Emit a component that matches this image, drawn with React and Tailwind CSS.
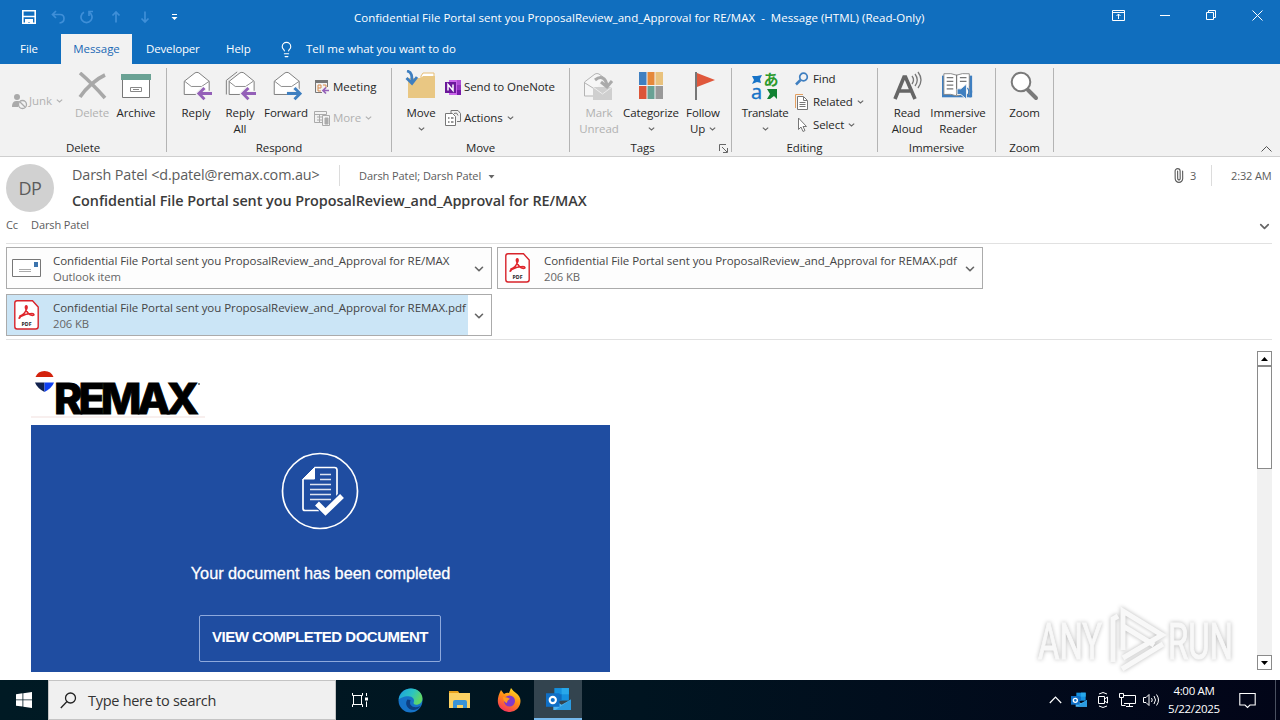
import { ChevronDown, Lightbulb, Paperclip } from "lucide-react";

const title = "Confidential File Portal sent you ProposalReview_and_Approval for RE/MAX";
const pdfName = "Confidential File Portal sent you ProposalReview_and_Approval for REMAX.pdf";

/* ---------- Ribbon building blocks ---------- */

function Caret({ className = "" }) {
  return (
    <svg width="7" height="4" viewBox="0 0 7 4" className={className}>
      <path d="M.8.6 3.5 3 6.2.6" fill="none" stroke="currentColor" strokeWidth="1.1" />
    </svg>
  );
}

function Group({ label, className, launcher, children }) {
  return (
    <div className={`flex h-[92px] shrink-0 ${className}`}>
      <div className="flex flex-1 flex-col">
        <div className="flex h-[76px]">{children}</div>
        <div className="flex h-4 items-center">
          <span className="flex-1 text-center leading-4">{label}</span>
          {launcher && (
            <svg width="9" height="9" viewBox="0 0 9 9" className="mr-[3px] ml-1" fill="none" stroke="#666">
              <path d="M.5 7V.5H7M3 3l5 5M8.500 4v4.500H4" />
            </svg>
          )}
        </div>
      </div>
      <div className="mt-1 h-[84px] w-px bg-[#b4b4b4]" />
    </div>
  );
}

function BigButton({ icon, lines, caret, className, disabled }) {
  return (
    <div className={`flex flex-col items-center pt-[6px] ${className} ${disabled ? "text-[#b1b1b1]" : ""}`}>
      <div className="flex h-8 w-8 items-center justify-center">{icon}</div>
      <span className="mt-[3px] leading-4">{lines[0]}</span>
      {lines[1] && (
        <span className="flex items-center gap-1 leading-4">
          {lines[1]}
          {caret && <Caret className="text-[#666]" />}
        </span>
      )}
      {!lines[1] && caret && <Caret className="mt-[6px] text-[#666]" />}
    </div>
  );
}

function SmallButton({ icon, label, caret, disabled, className = "" }) {
  return (
    <div className={`flex items-center ${className} ${disabled ? "text-[#b1b1b1]" : ""}`}>
      <span className="flex w-[18px] shrink-0">{icon}</span>
      <span className="leading-4">{label}</span>
      {caret && <Caret className={`ml-1 ${disabled ? "" : "text-[#666]"}`} />}
    </div>
  );
}

/* ---------- Ribbon icons ---------- */

function JunkIcon() {
  return (
    <svg width="17" height="17" viewBox="0 0 17 17">
      <circle cx="6" cy="4" r="3" fill="#aaa" />
      <path d="M1 14c0-5 2-6 5-6 2 0 3 .5 4 1.500L7 14z" fill="#aaa" />
      <circle cx="11.500" cy="11.500" r="4" fill="#f2f2f2" stroke="#aaa" strokeWidth="1.300" />
      <path d="m9 9 5 5" stroke="#aaa" strokeWidth="1.300" />
    </svg>
  );
}

function DeleteIcon() {
  return (
    <svg width="30" height="28" viewBox="0 0 30 28">
      <path d="M3 1C10 7 20 17 28 26M28 3C19 7 9 16 3 25" fill="none" stroke="#a8a8a8" strokeWidth="3.600" />
    </svg>
  );
}

function ArchiveIcon() {
  return (
    <svg width="32" height="28" viewBox="0 0 32 28">
      <path d="M2.500 8v17.500h27V8" fill="#fff" stroke="#777" />
      <path d="M1 2h30v6H1z" fill="#6aa294" />
      <path d="M10.500 15.500h11v4h-11zM13 17.500h6" fill="#fff" stroke="#888" />
    </svg>
  );
}

function MailIcon({ arrow, double }) {
  return (
    <svg width="34" height="32" viewBox="1 0 34 32">
      {double && <path d="M3.500 25V10L15 1" fill="none" stroke="#777" />}
      <path d="M5.500 11 17 2q2-1 4 0l11 9v14H5.500z" fill="#fff" stroke="#777" transform={double ? "translate(1 0)" : ""} />
      <path d="m6 11 7 5.500h11l8-5.500" fill="none" stroke="#888" />
      {arrow === "left" ? (
        <path d="M35 24H21M27 18l-6 6 6 6" fill="none" stroke="#f2f2f2" strokeWidth="6" />
      ) : (
        <path d="M19 24h14M27 18l6 6-6 6" fill="none" stroke="#f2f2f2" strokeWidth="6" />
      )}
      {arrow === "left" ? (
        <path d="M35 24H21M27 18l-6 6 6 6" fill="none" stroke="#9460b8" strokeWidth="3" />
      ) : (
        <path d="M19 24h14M27 18l6 6-6 6" fill="none" stroke="#3f7fc0" strokeWidth="3" />
      )}
    </svg>
  );
}

function MeetingIcon() {
  return (
    <svg width="16" height="16" viewBox="0 0 16 16">
      <path d="M1 1h13v3H1z" fill="#777" />
      <path d="M1.500 4v9.500H8M13.500 4v4" fill="none" stroke="#777" />
      <path d="M4 6h3v3H4zM9 6h3v3M4 9v3h3" fill="none" stroke="#d98a4a" />
      <path d="M15 11.500H9M12 8.500l-3 3 3 3" fill="none" stroke="#9460b8" strokeWidth="1.700" />
    </svg>
  );
}

function MoreIcon() {
  return (
    <svg width="17" height="17" viewBox="0 0 17 17" fill="none" stroke="#aaa">
      <path d="M.5 1.500h12v3H.5zM.5 4v8.500H8M3 7h5M3 10h5M5.500 4v8" />
      <path d="M8.500 5.500h7v10h-7z" fill="#f2f2f2" />
      <path d="M11 8h3v6h-3z" fill="#aaa" />
    </svg>
  );
}

function MoveIcon() {
  return (
    <svg width="32" height="32" viewBox="1 1 32 32">
      <path d="M17 7l2-3h11v5H17z" fill="#fff" stroke="#e6bd75" />
      <path d="M4 9h13l2-2h12v22H4z" fill="#e9c783" />
      <path d="M3 2c5 1 5 5 5 11M2.500 9 8 14.500 13 8" fill="none" stroke="#3f7fc0" strokeWidth="2.800" />
    </svg>
  );
}

function OneNoteIcon() {
  return (
    <svg width="17" height="17" viewBox="0 0 17 17">
      <path d="M4 1h12v15H4z" fill="#ca64ea" />
      <path d="M12 1h4v5h-4z" fill="#ae4bd5" />
      <path d="M12 6h4v5h-4z" fill="#9332bf" />
      <path d="M12 11h4v5h-4z" fill="#7719aa" />
      <path d="M0 3h11v11H0z" fill="#6b189a" />
      <path d="M3 11.500V5.500l5 6v-6" fill="none" stroke="#fff" strokeWidth="1.500" />
    </svg>
  );
}

function ActionsIcon() {
  return (
    <svg width="17" height="17" viewBox="0 0 17 17" fill="none" stroke="#777">
      <path d="M6 3.500V.5h7l2.500 3v8H12" />
      <path d="M.5 3.500h7l3 3v9H.5z" fill="#fff" />
      <path d="M3 8h1.500M3 12h1.500M6 8h2.500M6 12h2.500" strokeWidth="1.500" />
      <path d="M9 3.500q3-2 4 2" />
    </svg>
  );
}

function MarkUnreadIcon() {
  return (
    <svg width="32" height="30" viewBox="1 0 32 30">
      <path d="M11 25H2.500V11L13 3q2-1 4 0l4 3" fill="#f6f6f6" stroke="#b4b4b4" />
      <path d="m3 12 8 5" stroke="#b4b4b4" />
      <path d="M11 16h19v13H11z" fill="#cfcfcf" />
      <path d="m11 16 9.500 7 9.500-7" fill="none" stroke="#ededed" />
      <path d="M13 9c6-5 11-2 12 6M19 11l6 5 5-6" fill="none" stroke="#aaa" strokeWidth="3" />
    </svg>
  );
}

function CategorizeIcon() {
  return (
    <svg width="24" height="28" viewBox="0 0 24 28">
      <path d="M0 0h7.500v13H0z" fill="#3f7fc0" />
      <path d="M8.500 0h7v13h-7z" fill="#e5883a" />
      <path d="M16.500 0H24v13h-7.500z" fill="#e9c27d" />
      <path d="M0 14h7.500v13H0z" fill="#dc5538" />
      <path d="M8.500 14h7v13h-7z" fill="#68a194" />
      <path d="M16.500 14H24v13h-7.500z" fill="#999" />
    </svg>
  );
}

function FlagIcon() {
  return (
    <svg width="20" height="30" viewBox="0 0 20 30" className="ml-[3px]">
      <path d="M1 1v28" stroke="#777" strokeWidth="2" />
      <path d="M2 2l18 7-18 7z" fill="#e0583c" />
    </svg>
  );
}

function TranslateIcon() {
  return (
    <svg width="30" height="30" viewBox="0 0 30 30" className="overflow-visible">
      <path d="M2 5h5l5-1-2 4 1 4-4-1-5 2 2-4z" fill="#1673c8" />
      <path d="M17 18h10v10l-3-3-4 3h-3l3-5z" fill="#128233" />
      <text x="13.500" y="14" fontSize="15" fontWeight="700" fill="#2c9a2c" fontFamily="Noto Sans CJK JP, sans-serif">あ</text>
      <text x="1" y="28" fontSize="20" fill="#1673c8" stroke="#1673c8" strokeWidth=".4" fontFamily="Open Sans, sans-serif">a</text>
    </svg>
  );
}

function FindIcon() {
  return (
    <svg width="14" height="14" viewBox="0 0 14 14" fill="none" stroke="#3f7fc0">
      <circle cx="8.500" cy="5" r="3.800" strokeWidth="1.700" />
      <path d="M5.500 8 1 12.500" strokeWidth="2.500" />
    </svg>
  );
}

function RelatedIcon() {
  return (
    <svg width="14" height="16" viewBox="0 0 14 16" fill="none">
      <path d="M.5 14V.5H8" stroke="#e5a060" />
      <path d="M2.500 2.500h6l4 4v9h-10z" fill="#fff" stroke="#777" />
      <path d="M8.500 3v3.500H12M4.500 8.500h6M4.500 10.500h6M4.500 12.500h6" stroke="#777" />
    </svg>
  );
}

function SelectIcon() {
  return (
    <svg width="14" height="16" viewBox="0 0 14 16">
      <path d="M3.500 1v11.500L6 10l2 4.500 2-1L8 9.500h3.500z" fill="#fff" stroke="#777" />
    </svg>
  );
}

function ReadAloudIcon() {
  return (
    <svg width="30" height="30" viewBox="0 0 30 30" fill="none" stroke="#666">
      <path d="M3 28 12 6h1.500l9.500 22M6 20h13" strokeWidth="3.600" />
      <path d="M20 5q3 4 0 8M23 3q4.500 6 0 12M26 1q6 8 0 16" strokeWidth="1.300" stroke="#777" />
    </svg>
  );
}

function ReaderIcon() {
  return (
    <svg width="34" height="30" viewBox="1 0 34 30">
      <path d="M1 4h32v23H1z" fill="#3f7fc0" />
      <path d="M3 2q8-1 13.500 1.500Q22 1 30 2v22q-8-1-13.500 1.500Q11 23 3 24z" fill="#fff" stroke="#888" />
      <path d="M16.500 3v22M6 6h7M6 10h7M6 14h7M6 18h7M20 6h7M20 10h7" stroke="#777" strokeWidth="1.300" />
      <path d="M17 18h4l6-5v16l-6-5h-4z" fill="#3f7fc0" stroke="#f2f2f2" />
      <path d="M28 17q3 4 0 8M30.500 15q4 6 0 12" fill="none" stroke="#3f7fc0" strokeWidth="1.300" />
    </svg>
  );
}

function ZoomIcon() {
  return (
    <svg width="30" height="30" viewBox="1 0 30 30">
      <path d="m19 19 8 8" stroke="#7a7a7a" strokeWidth="4" strokeLinecap="round" />
      <circle cx="12" cy="11" r="9.300" fill="#fff" stroke="#7a7a7a" strokeWidth="2" />
    </svg>
  );
}

/* ---------- Title bar and tabs ---------- */

function TitleBar() {
  return (
    <div className="flex h-[34px] items-center text-white">
      <div className="flex w-[354px] pl-[14.5px]">
        <div className="flex w-[29px] justify-center">
          <svg width="14" height="14" viewBox="0 0 14 14">
            <path d="M.8.8h12.400v12.400H.8z" fill="none" stroke="#fff" strokeWidth="1.600" />
            <path d="M1 6.500h12" stroke="#fff" strokeWidth="1.500" />
            <path d="M3 9h8v5H8v-2H6v2H3z" fill="#fff" />
          </svg>
        </div>
        <div className="flex w-[29px] justify-center">
          <svg width="14" height="14" viewBox="0 0 14 14" fill="none" stroke="#3f8fd8" strokeWidth="1.700">
            <path d="M5 1 1.500 4.500 5 8M2 4.500h7q4 0 4 4T8.500 13" />
          </svg>
        </div>
        <div className="flex w-[29px] justify-center">
          <svg width="14" height="14" viewBox="0 0 14 14" fill="none" stroke="#3f8fd8" strokeWidth="1.700">
            <path d="M9 2.200a5.500 5.500 0 1 1-5 0M9 6V1.500h4" />
          </svg>
        </div>
        <div className="flex w-[29px] justify-center">
          <svg width="10" height="14" viewBox="0 0 10 14" fill="none" stroke="#3f8fd8" strokeWidth="1.700">
            <path d="M5 12.500V2M1.500 5.500 5 2l3.500 3.500" />
          </svg>
        </div>
        <div className="flex w-[29px] justify-center">
          <svg width="10" height="14" viewBox="0 0 10 14" fill="none" stroke="#3f8fd8" strokeWidth="1.700">
            <path d="M5 1.500V12M1.500 8.500 5 12l3.500-3.500" />
          </svg>
        </div>
        <div className="flex w-[29px] items-center justify-center">
          <svg width="7" height="7" viewBox="0 0 7 7" fill="#fff">
            <path d="M1 0h5v1H1zM.5 3h6l-3 3z" />
          </svg>
        </div>
      </div>
      <span className="pt-px tracking-[0.022px]">{title}&nbsp; -&nbsp; Message (HTML) (Read-Only)</span>
      <div className="ml-auto flex h-[30px] self-start">
        <div className="flex w-[46px] items-center justify-center pr-0.5">
          <svg width="13" height="11" viewBox="0 0 13 11" fill="none" stroke="#fff">
            <path d="M.5.5h12v10H.5zM.5 2.500h12M6.500 9V4M4.500 6l2-2 2 2" />
          </svg>
        </div>
        <div className="flex w-[46px] items-center justify-center">
          <div className="h-px w-[10px] bg-white" />
        </div>
        <div className="flex w-[46px] items-center justify-center">
          <svg width="10" height="10" viewBox="0 0 10 10" fill="none" stroke="#fff">
            <path d="M.5 2.500h7v7h-7zM2.500 2.500v-2h7v7h-2" />
          </svg>
        </div>
        <div className="flex w-[46px] items-center justify-center">
          <svg width="11" height="11" viewBox="0 0 11 11" fill="none" stroke="#fff">
            <path d="m.5.5 10 10M10.500.5l-10 10" />
          </svg>
        </div>
      </div>
    </div>
  );
}

function Tabs() {
  return (
    <div className="flex h-[30px] items-center tracking-[-0.05px] text-white">
      <span className="w-[61px] pl-5">File</span>
      <span className="flex h-full w-[71px] items-center justify-center bg-[#f2f2f2] text-[#1a69b5]">Message</span>
      <span className="w-[94px] pl-[14px] tracking-[-0.15px]">Developer</span>
      <span className="w-[52px]">Help</span>
      <Lightbulb size={17} strokeWidth={1.6} />
      <span className="ml-[11px]">Tell me what you want to do</span>
    </div>
  );
}

function Ribbon() {
  return (
    <div className="flex h-[93px] border-b border-[#cfcfcf] bg-[#f2f2f2] tracking-[-0.1px] text-[#262626]">
      <Group label="Delete" className="w-[167px]">
        <div className="flex w-[70px] pl-[11px] pt-[29px]">
          <SmallButton icon={<JunkIcon />} label="Junk" caret disabled className="h-4" />
        </div>
        <BigButton icon={<DeleteIcon />} lines={["Delete"]} className="w-11" disabled />
        <BigButton icon={<ArchiveIcon />} lines={["Archive"]} className="w-11" />
      </Group>
      <Group label="Respond" className="w-[225px]">
        <BigButton icon={<MailIcon arrow="left" />} lines={["Reply"]} className="ml-[7px] w-11" />
        <BigButton icon={<MailIcon arrow="left" double />} lines={["Reply", "All"]} className="w-11" />
        <BigButton icon={<MailIcon arrow="right" />} lines={["Forward"]} className="w-12" />
        <div className="ml-1 flex flex-col gap-[15px] pt-[15px]">
          <SmallButton icon={<MeetingIcon />} label={<span className="ml-px tracking-normal">Meeting</span>} className="h-4" />
          <SmallButton icon={<MoreIcon />} label={<span className="ml-px">More</span>} caret disabled className="h-4" />
        </div>
      </Group>
      <Group label="Move" className="w-[178px]">
        <BigButton icon={<MoveIcon />} lines={["Move"]} caret className="ml-[7px] w-11" />
        <div className="ml-0.5 flex flex-col gap-[15px] pt-[15px]">
          <SmallButton icon={<OneNoteIcon />} label={<span className="ml-px">Send to OneNote</span>} className="h-4" />
          <SmallButton icon={<ActionsIcon />} label={<span className="ml-px">Actions</span>} caret className="h-4" />
        </div>
      </Group>
      <Group label="Tags" className="w-[162px]" launcher>
        <BigButton icon={<MarkUnreadIcon />} lines={["Mark", "Unread"]} className="ml-2 w-[42px]" disabled />
        <BigButton icon={<CategorizeIcon />} lines={["Categorize"]} caret className="w-[62px]" />
        <BigButton icon={<FlagIcon />} lines={["Follow", "Up"]} caret className="w-[42px]" />
      </Group>
      <Group label="Editing" className="w-[146px]">
        <BigButton icon={<TranslateIcon />} lines={["Translate"]} caret className="ml-2 w-[50px] tracking-[-0.35px]" />
        <div className="ml-[5px] flex flex-col gap-[7px] pt-[7px]">
          <SmallButton icon={<FindIcon />} label="Find" className="h-4" />
          <SmallButton icon={<RelatedIcon />} label="Related" caret className="h-4" />
          <SmallButton icon={<SelectIcon />} label="Select" caret className="h-4" />
        </div>
      </Group>
      <Group label="Immersive" className="w-[118px]">
        <BigButton icon={<ReadAloudIcon />} lines={["Read", "Aloud"]} className="ml-2 w-[42px]" />
        <BigButton icon={<ReaderIcon />} lines={["Immersive", "Reader"]} className="w-[60px]" />
      </Group>
      <Group label="Zoom" className="w-[58px]">
        <BigButton icon={<ZoomIcon />} lines={["Zoom"]} className="w-[57px]" />
      </Group>
      <div className="flex flex-1 items-end justify-end pr-2 pb-1">
        <svg width="11" height="6" viewBox="0 0 11 6" fill="none" stroke="#555">
          <path d="M.5 5.500l5-5 5 5" />
        </svg>
      </div>
    </div>
  );
}

/* ---------- Message header ---------- */

function PdfIcon() {
  return (
    <svg width="25" height="30" viewBox="0 0 25 30">
      <path d="M3 .8h15.500L24.200 7v19.500q0 2.500-2.500 2.500H3Q.8 29 .8 26.500V3Q.8.8 3 .8z" fill="#fff" stroke="#d8232a" strokeWidth="1.400" />
      <path d="M6 16c4-1 6-5 7-8 .5-3-2-3-1.500 0 .5 4 4 7 7 7.500 2 0 2-2-.5-2-4 0-8 1-11.500 3-2 1.500-1.500 2.500-.5 1z" fill="none" stroke="#e0262c" strokeWidth="1.600" />
      <text x="12.500" y="26" fontSize="6" fontWeight="700" textAnchor="middle" fill="#222" textLength="10" lengthAdjust="spacingAndGlyphs" fontFamily="Open Sans, sans-serif">PDF</text>
    </svg>
  );
}

function OutlookItemIcon() {
  return (
    <svg width="29" height="18" viewBox="0 0 29 18">
      <path d="M.5.500h28v17H.5z" fill="#fff" stroke="#777" />
      <path d="M22 3h4v5h-4z" fill="#3d74ad" />
      <path d="M7 10.500h12M7 12.500h12" stroke="#aaa" />
    </svg>
  );
}

function Attachment({ icon, name, detail, selected }) {
  return (
    <div className={`flex h-[42px] w-[486px] border border-[#ababab] ${selected ? "bg-white" : "bg-[#fdfdfd]"}`}>
      <div className={`flex w-[461px] shrink-0 items-center ${selected ? "bg-[#cbe5f6]" : ""}`}>
        <div className="flex w-[46px] shrink-0 justify-center pr-[7px]">{icon}</div>
        <div className="text-[#444]">
          <div className="pb-px leading-[15px] tracking-[-0.045px]">{name}</div>
          <div className="text-[11.3px] leading-[15px] tracking-[-0.08px] text-[#666]">{detail}</div>
        </div>
      </div>
      <div className="flex flex-1 items-center justify-center pt-0.5 pr-0.5">
        <ChevronDown size={14} strokeWidth={2.8} color="#666" />
      </div>
    </div>
  );
}

function MessageHeader() {
  return (
    <div className="flex h-[183px] flex-col pr-2 pl-[6px] text-[#5c5c5c]">
      <div className="flex h-[58px] pt-[7px]">
        <div className="flex h-12 w-12 items-center justify-center rounded-full bg-[#d1d1d1] text-[18px] tracking-[-0.4px]">DP</div>
        <div className="ml-[18px] flex flex-1 flex-col">
          <div className="flex h-[22px] items-center">
            <span className="w-[267px] text-[14.4px] tracking-[-0.15px]">Darsh Patel &lt;d.patel@remax.com.au&gt;</span>
            <div className="h-[21px] w-px bg-[#dcdcdc]" />
            <span className="ml-[19px] pt-0.5 text-[11px] tracking-[-0.07px]">Darsh Patel; Darsh Patel</span>
            <svg width="7" height="4" viewBox="0 0 7 4" className="mt-1 ml-[7px]" fill="#666">
              <path d="M.5 0h6l-3 3.500z" />
            </svg>
            <Paperclip size={15} strokeWidth={1.8} className="ml-auto -rotate-45" />
            <span className="ml-1 w-[21px] pt-0.5 text-[11px]">3</span>
            <div className="h-[21px] w-px bg-[#dcdcdc]" />
            <span className="ml-[19px] w-[41px] pt-0.5 text-[11px] tracking-[-0.12px]">2:32 AM</span>
          </div>
          <div className="mt-[5px] text-[14.4px] leading-5 font-semibold tracking-[-0.055px] text-[#3b3b3b]">{title}</div>
        </div>
      </div>
      <div className="flex h-[28px] text-[11px] leading-5 tracking-[-0.1px]">
        <span className="w-[25px]">Cc</span>
        <span className="flex-1">Darsh Patel</span>
        <ChevronDown size={15} strokeWidth={2.8} color="#666" className="mt-1" />
      </div>
      <div className="h-px shrink-0 bg-[#e1e1e1]" />
      <div className="flex h-[96px] shrink-0 flex-wrap content-start gap-[5px] border-b border-[#e1e1e1] pt-[3px]">
        <Attachment icon={<OutlookItemIcon />} name={title} detail="Outlook item" />
        <Attachment icon={<PdfIcon />} name={pdfName} detail="206 KB" />
        <Attachment icon={<PdfIcon />} name={pdfName} detail="206 KB" selected />
      </div>
    </div>
  );
}

/* ---------- Message body ---------- */

function RemaxLogo() {
  return (
    <svg width="176" height="50" viewBox="0 0 176 50" className="block overflow-visible">
      <path d="M4.500 7C6 3 9 1 13.500 1S21 3 22.500 7z" fill="#d3220c" />
      <path d="M4 12.500h9.500V22Q6 18 4 12.500z" fill="#12224e" />
      <path d="M13.500 12.500H23Q21 18 13.500 22z" fill="#1040f0" />
      <text x="23" y="43.500" fontSize="42" fontWeight="800" textLength="141" lengthAdjust="spacingAndGlyphs" letterSpacing="-4" stroke="#000" strokeWidth=".8" fontFamily="Inter, sans-serif">REMAX</text>
      <circle cx="168" cy="14" r="1" fill="#666" />
      <path d="M0 47h174" stroke="#f8efee" strokeWidth="2" />
    </svg>
  );
}

function CompletedIcon() {
  return (
    <svg width="78" height="78" viewBox="0 0 78 78" fill="none" stroke="#fff" className="mr-px">
      <circle cx="39" cy="39" r="37.500" strokeWidth="1.700" />
      <path d="M33.500 15.500h20q2.500 0 2.500 2.500v27M38 58.500H24q-2 0-2-2V27" strokeWidth="1.700" />
      <path d="M33.500 15.500V27H22z" fill="#fff" strokeWidth="1" />
      <path d="M39 22.500h11M39 27.500h11M29 32.500h21M29 37.500h21M29 42.500h21M29 47.500h21" strokeWidth="1.400" strokeOpacity=".85" />
      <path d="m36 51 8.500 9L61 43.500" stroke="#1f4da1" strokeWidth="8" />
      <path d="m36 51.500 8.500 8.500L61 44" strokeWidth="5.500" />
    </svg>
  );
}

function Watermark() {
  return (
    <svg width="206" height="74" viewBox="0 0 206 74" className="absolute top-[264px] left-[1032px] drop-shadow-[0_0_2px_rgba(0,0,0,0.28)]">
      <g fontFamily="Roboto, sans-serif" fontSize="50" fill="#f8f8f8" stroke="#f8f8f8" strokeWidth="1">
        <text x="6" y="55" textLength="64" lengthAdjust="spacingAndGlyphs">ANY</text>
        <text x="136" y="55" textLength="65" lengthAdjust="spacingAndGlyphs">RUN</text>
      </g>
      <g fill="none" stroke="#f8f8f8" strokeWidth="5">
        <path d="M81 58V15l5-3M91 46V7l39 24-39 23M91 22l31 19M90 65l41-25" />
      </g>
    </svg>
  );
}

function ScrollBar() {
  return (
    <div className="mt-[11px] flex h-[319px] w-[15px] flex-col bg-[#f1f1f1]">
      <div className="flex h-[15px] items-center justify-center border border-[#8a8a8a] bg-white">
        <svg width="7" height="4" viewBox="0 0 7 4">
          <path d="M0 4h7L3.500 0z" />
        </svg>
      </div>
      <div className="h-[103px] border border-[#8a8a8a] bg-white" />
      <div className="mt-auto flex h-[15px] items-center justify-center border border-[#8a8a8a] bg-white">
        <svg width="7" height="4" viewBox="0 0 7 4">
          <path d="M0 0h7L3.500 4z" />
        </svg>
      </div>
    </div>
  );
}

function MessageBody() {
  return (
    <div className="relative flex h-[340px] justify-between pr-2 pl-[31px]">
      <div className="pt-[30px]">
        <RemaxLogo />
        <div className="mt-[4.5px] flex h-[247.5px] w-[579px] flex-col items-center bg-[#1f4da1] pt-[27px] font-['Liberation_Sans',Arial,sans-serif] text-white">
          <CompletedIcon />
          <div className="mt-[31px] text-[16.3px] leading-6 tracking-[-0.02px] [-webkit-text-stroke:0.3px_white]">Your document has been completed</div>
          <div className="mt-[30.5px] mr-px flex h-[47px] w-[242px] items-center justify-center rounded-[2px] border border-[#8ea9dc] pb-0.5 text-[15px] font-bold tracking-[-0.5px]">
            VIEW COMPLETED DOCUMENT
          </div>
        </div>
      </div>
      <ScrollBar />
      <Watermark />
    </div>
  );
}

/* ---------- Taskbar ---------- */

function OutlookIcon({ size }) {
  return (
    <svg width={size} height={size} viewBox="0 0 24 24">
      <path d="M8 1h14v12H8z" fill="#1490df" />
      <path d="M15 1h7v6h-7z" fill="#28a8ea" />
      <path d="M8 7h7v6H8z" fill="#0f6cbd" />
      <path d="M7 12l8 5 9-5v10H7z" fill="#50b5ef" />
      <path d="M24 12v10H9z" fill="#2b9be0" />
      <path d="M0 6h13v13H0z" fill="#0f6fc6" />
      <circle cx="6.500" cy="12.500" r="3" fill="none" stroke="#fff" strokeWidth="2" />
    </svg>
  );
}

function EdgeIcon() {
  return (
    <svg width="25" height="25" viewBox="0 0 24 24">
      <defs>
        <linearGradient id="edgeTop" x1="0" y1="0" x2="1" y2=".4">
          <stop offset="0" stopColor="#1a9fe0" />
          <stop offset=".6" stopColor="#2cc4c0" />
          <stop offset="1" stopColor="#5fd668" />
        </linearGradient>
      </defs>
      <circle cx="12" cy="12" r="11.500" fill="#1673c8" />
      <path d="M.6 11C2 4 7 .5 12.500.5 19 .5 23.500 5 23.500 10c0 4-3 6-6 6-2 0-3-1-2.500-2 1.500-3-1-6-5-6-5 0-8 2-9.400 3z" fill="url(#edgeTop)" />
      <path d="M9 11c-3 4 0 10 6 10 2 0 5-1 7-4-3 2-8 2-10-1-1-2 0-3.500 0-4.500z" fill="#0d3f82" />
    </svg>
  );
}

function ExplorerIcon() {
  return (
    <svg width="23" height="20" viewBox="0 0 23 20">
      <path d="M1 1h9l2 3H1z" fill="#e8a21c" />
      <path d="M1 3h21v15H1z" fill="#fbd163" />
      <path d="M5 18v-6q0-2 2-2h10q2 0 2 2v6h-4v-3H9v3z" fill="#3a93d6" />
    </svg>
  );
}

function FirefoxIcon() {
  return (
    <svg width="24" height="24" viewBox="0 0 24 24">
      <defs>
        <linearGradient id="fox" x1=".8" y1="0" x2=".3" y2="1">
          <stop offset="0" stopColor="#ffe226" />
          <stop offset=".5" stopColor="#ff8a16" />
          <stop offset="1" stopColor="#f5305f" />
        </linearGradient>
      </defs>
      <path d="M4 2l3 4q3-2 5-1l2-5q2 3 5 5c3 2 4.500 5 4.500 8A11 11 0 0 1 12 24 11 11 0 0 1 .8 13C.8 9 2 6 4 2z" fill="url(#fox)" />
      <circle cx="12.500" cy="13" r="5.500" fill="#8139c9" />
      <path d="M6 9q5 0 7 2-3 1-3 4-4-1-4-6z" fill="#ff9a1f" />
    </svg>
  );
}

function Taskbar() {
  return (
    <div className="flex h-10 items-center bg-linear-to-r from-[#001a24] via-[#001420] to-[#020518] text-white">
      <div className="flex w-12 justify-center">
        <svg width="16" height="16" viewBox="0 0 16 16" fill="#fff">
          <path d="M0 2.200 6.500 1.300v6.200H0zM7.300 1.200 16 0v7.500H7.300zM0 8.300h6.500v6.300L0 13.700zM7.300 8.300H16V16l-8.700-1.200z" />
        </svg>
      </div>
      <div className="flex h-10 w-72 items-center border border-[#c4c4c4] bg-[#f0f0f0] pl-[11px] text-[#333]">
        <svg width="17" height="17" viewBox="0 0 17 17" fill="none" stroke="#222" strokeWidth="1.300">
          <circle cx="10.500" cy="6" r="5" />
          <path d="M7 9.500.8 16" />
        </svg>
        <span className="ml-[11px] pt-0.5 text-[14.5px] tracking-[-0.28px]">Type here to search</span>
      </div>
      <div className="flex w-[50px] justify-center pr-0.5">
        <svg width="17" height="16" viewBox="0 0 17 16" fill="none" stroke="#fff">
          <path d="M.5 1v2.500h10V1M.5 15v-2.500h10V15M1.500 3.500v9M9.500 3.500v9M14.500 1v3M14.500 9.500V15" />
          <path d="M13 5.500h3v3h-3z" fill="#fff" stroke="none" />
        </svg>
      </div>
      <div className="flex w-[49px] justify-center"><EdgeIcon /></div>
      <div className="flex w-[49px] justify-center"><ExplorerIcon /></div>
      <div className="flex w-[49px] justify-center"><FirefoxIcon /></div>
      <div className="ml-px flex h-10 w-[48px] items-center justify-center border-b-2 border-[#76b9ed] bg-[#33444f]">
        <OutlookIcon size={25} />
      </div>

      <div className="ml-auto flex h-10 items-center">
        <div className="flex w-6 justify-center">
          <svg width="13" height="8" viewBox="0 0 13 8" fill="none" stroke="#fff" strokeWidth="1.200">
            <path d="M.8 7 6.500 1.200 12.200 7" />
          </svg>
        </div>
        <div className="flex w-6 justify-center"><OutlookIcon size={16} /></div>
        <div className="flex w-6 justify-center">
          <svg width="14" height="18" viewBox="0 0 14 18" fill="none" stroke="#fff">
            <path d="M2.500 5.500h6v7h-6zM8.500 8l3-2v6l-3-2M3 3q4-3 8 0M3 15q4 3 8 0" />
          </svg>
        </div>
        <div className="flex w-6 justify-center">
          <svg width="17" height="16" viewBox="0 0 17 16" fill="none" stroke="#fff">
            <path d="M5 3.500h11.500v8H5M10.500 11.500v3M7 14.500h7M.5 1.500h4v4h-4zM2.500 5.500v8h4" />
          </svg>
        </div>
        <div className="flex w-6 justify-center">
          <svg width="17" height="14" viewBox="0 0 17 14" fill="none" stroke="#fff">
            <path d="M.5 4.500H3l3-3v11l-3-3H.5zM8.500 5q1.500 2 0 4M11 3q3 4 0 8M13.500 1.500q4 5.500 0 11" />
          </svg>
        </div>
        <div className="w-[62px] text-center text-[11.500px] leading-[18px] tracking-[-0.3px]">
          <div>4:00 AM</div>
          <div>5/22/2025</div>
        </div>
        <div className="flex w-[45px] justify-center">
          <svg width="17" height="17" viewBox="0 0 17 17" fill="none" stroke="#fff" strokeWidth="1.100">
            <path d="M.8 1.500h15.400v11.500H11l-2.500 2.500L6 13H.8z" />
          </svg>
        </div>
        <div className="ml-[5px] h-10 w-px bg-[#4a5060]" />
        <div className="w-[4px]" />
      </div>
    </div>
  );
}

export default function App() {
  return (
    <div className="flex h-[720px] w-[1280px] flex-col overflow-hidden bg-white font-['Open_Sans','Noto_Sans',sans-serif] text-[11.5px] whitespace-nowrap">
      <div className="bg-[#106ebe]">
        <TitleBar />
        <Tabs />
      </div>
      <Ribbon />
      <MessageHeader />
      <MessageBody />
      <Taskbar />
    </div>
  );
}
